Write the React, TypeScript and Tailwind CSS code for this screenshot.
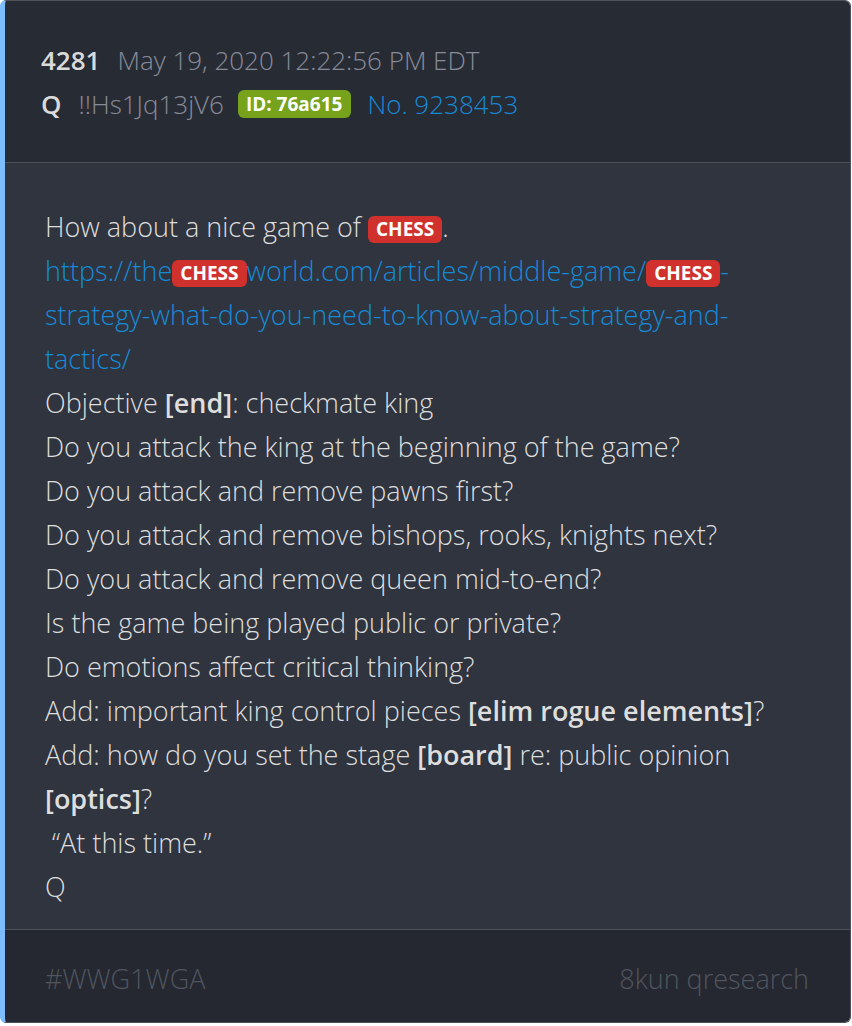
const font = { fontFamily: '"Open Sans", "Noto Sans", sans-serif' };

function Chess() {
  return (
    <span className="inline-block rounded-[6px] bg-[#d0312d] px-[8px] align-middle text-[19px] font-bold leading-[27px] text-white">
      CHESS
    </span>
  );
}

const lines: React.ReactNode[] = [
  <>
    How about a nice game of <Chess />.
  </>,
  <a className="text-[#168ad6]">
    https://the<Chess />world.com/articles/middle-game/<Chess />-strategy-what-do-you-need-to-know-about-strategy-and-tactics/
  </a>,
  <>
    Objective <b className="font-semibold">[end]</b>: checkmate king
  </>,
  'Do you attack the king at the beginning of the game?',
  'Do you attack and remove pawns first?',
  'Do you attack and remove bishops, rooks, knights next?',
  'Do you attack and remove queen mid-to-end?',
  'Is the game being played public or private?',
  'Do emotions affect critical thinking?',
  <>
    Add: important king control pieces <b className="font-semibold">[elim rogue elements]</b>?
  </>,
  <>
    Add: how do you set the stage <b className="font-semibold">[board]</b> re: public opinion <b className="font-semibold">[optics]</b>?
  </>,
  '\u00a0\u201cAt this time.\u201d',
  'Q',
];

export default function App() {
  return (
    <div className="min-h-screen bg-white" style={font}>
      <div className="w-[851px] overflow-hidden rounded-[6px] border border-[#4d525b] border-l-[5px] border-l-[#7dbdfd]">
        {/* header */}
        <div className="bg-[#272b34] px-[36px] pt-[37px] pb-[36px] text-[26px] font-light leading-[44px]">
          <div className="flex items-center">
            <span className="font-semibold text-[#dadada]">4281</span>
            <span className="ml-[17px] text-[#878c98]">May 19, 2020 12:22:56 PM EDT</span>
          </div>
          <div className="flex items-center">
            <span className="font-semibold text-[#dadada]">Q</span>
            <span className="ml-[17px] text-[#878c98]">!!Hs1Jq13jV6</span>
            <span className="ml-[14px] rounded-[6px] bg-[#76a21c] pl-[8px] pr-[9px] text-[19px] font-bold leading-[28px] text-white">
              ID: 76a615
            </span>
            <span className="ml-[16px] text-[#168ad6]">No. 9238453</span>
          </div>
        </div>
        {/* body */}
        <div className="border-t border-[#4d525b] bg-[#2f343e] px-[40px] pt-[42px] pb-[20px] text-[27px] font-light leading-[44px] text-[#dedede]">
          {lines.map((l, i) => (
            <div key={i}>{l}</div>
          ))}
        </div>
        {/* footer */}
        <div className="flex items-center justify-between border-t border-[#4d525b] bg-[#252830] pl-[40px] pr-[41px] pt-[29px] pb-[23px] text-[27px] font-light leading-[40px] text-[#50555f]">
          <span>#WWG1WGA</span>
          <span>8kun qresearch</span>
        </div>
      </div>
    </div>
  );
}
